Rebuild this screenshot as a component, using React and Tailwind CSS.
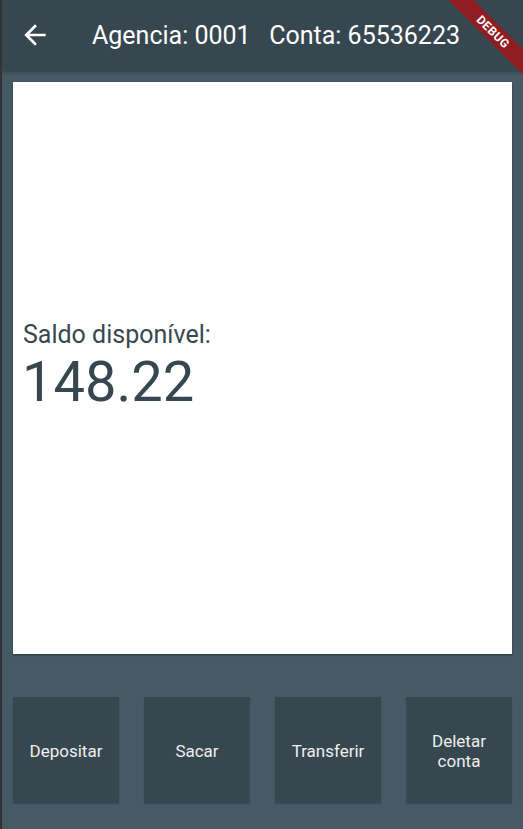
import React from "react";

export default function App() {
  const buttons = [["Depositar"], ["Sacar"], ["Transferir"], ["Deletar", "conta"]];
  return (
    <div className="w-[523px] h-[829px] bg-[#455A64] flex flex-col relative overflow-hidden border-l-2 border-[#303436]" style={{ fontFamily: "Roboto, 'Noto Sans', sans-serif" }}>
      <div className="h-[70px] bg-[#37474F] flex items-center shrink-0 shadow-[0_2px_4px_rgba(0,0,0,0.3)] relative z-10">
        <div className="w-[70px] flex justify-center -ml-[2px]">
          <svg width="32" height="32" viewBox="0 0 24 24">
            <path d="M20 11H7.83l5.59-5.59L12 4l-8 8 8 8 1.41-1.41L7.83 13H20v-2z" fill="#ffffff" />
          </svg>
        </div>
        <div className="text-white text-[25px] ml-[22px] whitespace-pre leading-none">Agencia: 0001   Conta: 65536223</div>
      </div>
      <div className="mt-[12px] mx-[11px] h-[572px] bg-white shadow-[0_1px_2px_rgba(0,0,0,0.4)] flex flex-col justify-center pl-[10px]">
        <div className="text-[#37474F] text-[25px] leading-[28px]">Saldo disponível:</div>
        <div className="text-[#37474F] text-[56px] leading-[66px] -ml-[1px]">148.22</div>
      </div>
      <div className="mt-[43px] mx-[11px] flex justify-between">
        {buttons.map((lines, i) => (
          <div key={i} className="w-[106px] h-[106px] bg-[#37474F] flex flex-col items-center justify-center text-[#eeeeee] text-[17px] leading-[20px] pt-[2px] shadow-[0_1px_1px_rgba(0,0,0,0.15)]">
            {lines.map((l) => (
              <span key={l}>{l}</span>
            ))}
          </div>
        ))}
      </div>
      <div className="absolute top-0 right-0 w-[80px] h-[80px] overflow-hidden pointer-events-none z-20">
        <div className="absolute top-[23px] left-[-20px] w-[140px] h-[18px] bg-[#8E1E21] rotate-45 flex items-center justify-center text-white text-[12px] font-bold tracking-[0.5px] leading-none">
          DEBUG
        </div>
      </div>
    </div>
  );
}
